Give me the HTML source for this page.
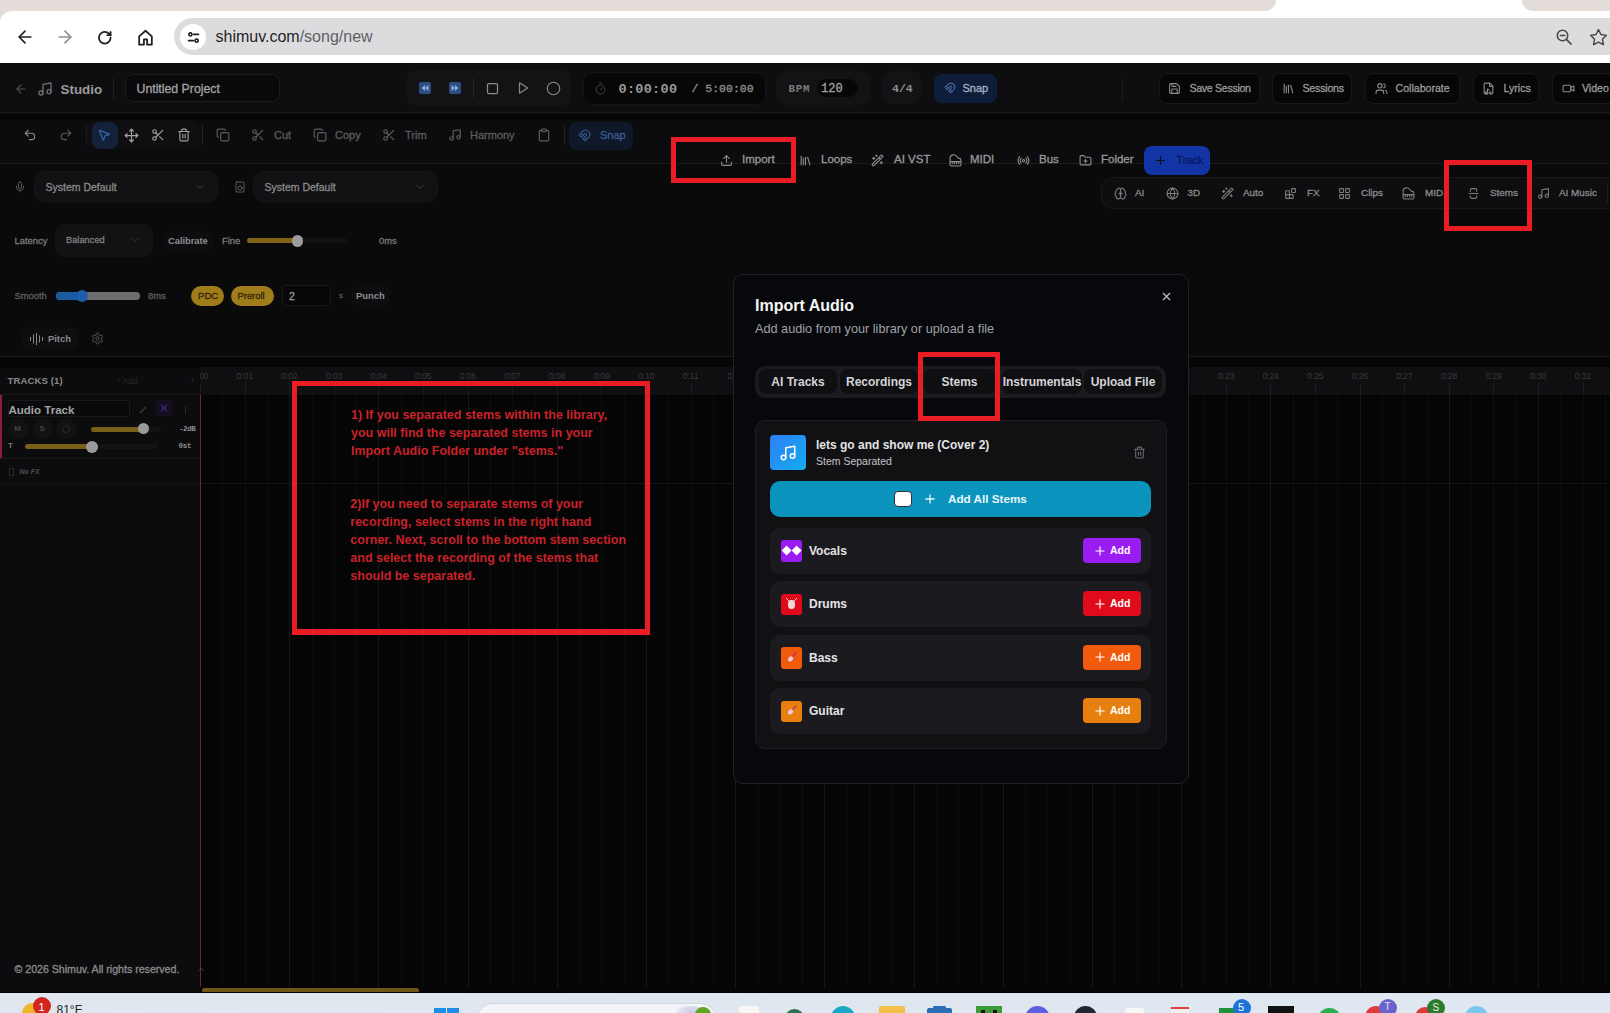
<!DOCTYPE html>
<html><head><meta charset="utf-8">
<style>
*{box-sizing:border-box;margin:0;padding:0}
html,body{width:1610px;height:1013px;overflow:hidden;background:#e4dcd8;font-family:"Liberation Sans",sans-serif}
.a{position:absolute}
svg{position:absolute;overflow:visible}
.t{position:absolute;white-space:nowrap}
.sb{-webkit-text-stroke:0.3px currentColor}
</style></head><body>
<div class="a" style="left:1260px;top:0px;width:280px;height:12px;background:#fff"></div><div class="a" style="left:0px;top:0px;width:1276px;height:11px;background:#e4dcd8;border-bottom-right-radius:11px"></div><div class="a" style="left:1522px;top:0px;width:88px;height:11px;background:#e4dcd8;border-bottom-left-radius:11px"></div><div class="a" style="left:0px;top:11px;width:1610px;height:52px;background:#fff;border-top-left-radius:12px"></div><svg style="left:14.5px;top:27.0px" width="20" height="20" viewBox="0 0 24 24" fill="none" stroke="#1f1f1f" stroke-width="2" stroke-linecap="round" stroke-linejoin="round" ><path d="m12 19-7-7 7-7"/><path d="M19 12H5"/></svg><svg style="left:55.0px;top:27.0px" width="20" height="20" viewBox="0 0 24 24" fill="none" stroke="#8e8e8e" stroke-width="2" stroke-linecap="round" stroke-linejoin="round" ><path d="M5 12h14"/><path d="m12 5 7 7-7 7"/></svg><svg style="left:97.2px;top:29.5px" width="15.5" height="15.5" viewBox="0 0 24 24" fill="none" stroke="#1f1f1f" stroke-width="2.8" stroke-linecap="round" stroke-linejoin="round" ><path d="M21 12a9 9 0 1 1-9-9c2.52 0 4.93 1 6.74 2.74L21 8"/><path d="M21 3v5h-5"/></svg><svg style="left:135.5px;top:27.5px" width="19" height="19" viewBox="0 0 24 24" fill="none" stroke="#1f1f1f" stroke-width="2.2" stroke-linecap="round" stroke-linejoin="round" ><path d="M4 21V10.5L12 3.5l8 7V21h-6v-6.5h-4V21z"/></svg><div class="a" style="left:174px;top:18px;width:1500px;height:37px;background:#dcdcdf;border-radius:19px"></div><div class="a" style="left:180px;top:24px;width:26px;height:26px;background:#fff;border-radius:50%"></div><svg style="left:185.5px;top:29.5px" width="15" height="15" viewBox="0 0 24 24" fill="none" stroke="#1f1f1f" stroke-width="2.6" stroke-linecap="round" stroke-linejoin="round" ><circle cx="7" cy="7" r="2.5"/><path d="M12 7h8"/><circle cx="17" cy="17" r="2.5"/><path d="M4 17h8"/></svg><div class="t " style="left:215.5px;top:29.0px;font-size:16px;line-height:16px;color:#1f1f1f;font-weight:normal;font-family:'Liberation Sans',sans-serif;">shimuv.com<span style="color:#5c5f63">/song/new</span></div><svg style="left:1555.0px;top:28.0px" width="18" height="18" viewBox="0 0 24 24" fill="none" stroke="#474747" stroke-width="2" stroke-linecap="round" stroke-linejoin="round" ><circle cx="10" cy="10" r="7"/><path d="M7 10h6"/><path d="m15.5 15.5 6 6"/></svg><svg style="left:1589.0px;top:27.5px" width="19" height="19" viewBox="0 0 24 24" fill="none" stroke="#474747" stroke-width="1.8" stroke-linecap="round" stroke-linejoin="round" ><polygon points="12 2 15.09 8.26 22 9.27 17 14.14 18.18 21.02 12 17.77 5.82 21.02 7 14.14 2 9.27 8.91 8.26 12 2"/></svg><div class="a" style="left:0px;top:63px;width:1610px;height:930px;background:#0a0a0b"></div><div class="a" style="left:0px;top:63px;width:1610px;height:50px;background:#0e0e10;border-bottom:1px solid #19191b"></div><div class="a" style="left:0px;top:114px;width:1610px;height:6px;background:#050506"></div><svg style="left:14.0px;top:81.5px" width="14" height="14" viewBox="0 0 24 24" fill="none" stroke="#4f4f4f" stroke-width="2" stroke-linecap="round" stroke-linejoin="round" ><path d="m12 19-7-7 7-7"/><path d="M19 12H5"/></svg><svg style="left:36.5px;top:80.5px" width="16" height="16" viewBox="0 0 24 24" fill="none" stroke="#6f6f6f" stroke-width="2" stroke-linecap="round" stroke-linejoin="round" ><path d="M9 18V5l12-2v13"/><circle cx="6" cy="18" r="3"/><circle cx="18" cy="16" r="3"/></svg><div class="t " style="left:60.5px;top:82.7px;font-size:13.4px;line-height:13.4px;color:#9c9c9c;font-weight:bold;font-family:'Liberation Sans',sans-serif;">Studio</div><div class="a" style="left:113px;top:78px;width:1px;height:22px;background:#1f1f22"></div><div class="a" style="left:125px;top:74px;width:155px;height:28px;background:#09090b;border:1px solid #1d1d20;border-radius:8px"></div><div class="t sb" style="left:136.5px;top:83.4px;font-size:12.3px;line-height:12.3px;color:#a3a3a3;font-weight:normal;font-family:'Liberation Sans',sans-serif;">Untitled Project</div><div class="a" style="left:406px;top:70px;width:165px;height:36px;background:#131315;border-radius:10px"></div><div class="a" style="left:419px;top:82px;width:12px;height:12px;background:#2a4f80;border-radius:2px"></div><svg style="left:419px;top:82px" width="12" height="12" viewBox="0 0 12 12"><path d="M6 3L2.5 6 6 9zM9.5 3L6 6 9.5 9z" fill="#8fb0dc"/></svg><div class="a" style="left:449px;top:82px;width:12px;height:12px;background:#2a4f80;border-radius:2px"></div><svg style="left:449px;top:82px" width="12" height="12" viewBox="0 0 12 12"><path d="M6 3L9.5 6 6 9zM2.5 3L6 6 2.5 9z" fill="#8fb0dc"/></svg><div class="a" style="left:473px;top:78px;width:1px;height:20px;background:#232326"></div><svg style="left:484.5px;top:80.5px" width="15" height="15" viewBox="0 0 24 24" fill="none" stroke="#8a8a8a" stroke-width="2" stroke-linecap="round" stroke-linejoin="round" ><rect x="4" y="4" width="16" height="16" rx="2"/></svg><svg style="left:515.5px;top:81.0px" width="14" height="14" viewBox="0 0 24 24" fill="none" stroke="#8a8a8a" stroke-width="2" stroke-linecap="round" stroke-linejoin="round" ><polygon points="6 3 20 12 6 21 6 3"/></svg><svg style="left:545.5px;top:80.5px" width="15" height="15" viewBox="0 0 24 24" fill="none" stroke="#8a8a8a" stroke-width="1.8" stroke-linecap="round" stroke-linejoin="round" ><circle cx="12" cy="12" r="10"/></svg><div class="a" style="left:583px;top:72px;width:183px;height:32.5px;background:#070708;border-radius:10px;border:1px solid #141416"></div><svg style="left:593.5px;top:81.5px" width="13" height="13" viewBox="0 0 24 24" fill="none" stroke="#3a3a3a" stroke-width="2" stroke-linecap="round" stroke-linejoin="round" ><line x1="10" x2="14" y1="2" y2="2"/><line x1="12" x2="15" y1="14" y2="11"/><circle cx="12" cy="14" r="8"/></svg><div class="t " style="left:618.5px;top:82.5px;font-size:13.5px;line-height:13.5px;color:#9a9a9a;font-weight:bold;font-family:'Liberation Mono',monospace;letter-spacing:0.3px">0:00:00</div><div class="t sb" style="left:691.5px;top:83.0px;font-size:11.5px;line-height:11.5px;color:#8f8f8f;font-weight:normal;font-family:'Liberation Mono',monospace;letter-spacing:0px">/ 5:00:00</div><div class="a" style="left:776px;top:71px;width:95px;height:34px;background:#131315;border-radius:10px"></div><div class="t " style="left:788.5px;top:83.6px;font-size:10.8px;line-height:10.8px;color:#7a7a7a;font-weight:bold;font-family:'Liberation Mono',monospace;letter-spacing:0.8px">BPM</div><div class="a" style="left:817px;top:79px;width:41px;height:18px;background:#070708;border-radius:9px"></div><div class="t sb" style="left:821.0px;top:83.0px;font-size:12px;line-height:12px;color:#a0a0a0;font-weight:normal;font-family:'Liberation Mono',monospace;">120</div><div class="a" style="left:882px;top:71px;width:40px;height:33px;background:#131315;border-radius:10px"></div><div class="t " style="left:892.0px;top:83.2px;font-size:11.5px;line-height:11.5px;color:#8f8f8f;font-weight:bold;font-family:'Liberation Mono',monospace;">4/4</div><div class="a" style="left:934px;top:74px;width:63px;height:29px;background:#0d1d3a;border-radius:8px"></div><svg style="left:944.0px;top:82.0px" width="12" height="12" viewBox="0 0 24 24" fill="none" stroke="#5a7fc0" stroke-width="2" stroke-linecap="round" stroke-linejoin="round" ><path d="m6 15-4-4 6.75-6.77a7.790 7.790 0 0 1 11 11L13 22l-4-4 6.39-6.36a2.14 2.14 0 0 0-3-3L6 15"/><path d="m5 8 4 4"/><path d="m12 15 4 4"/></svg><div class="t sb" style="left:962.5px;top:83.0px;font-size:11px;line-height:11px;color:#a7b4c8;font-weight:normal;font-family:'Liberation Sans',sans-serif;">Snap</div><div class="a" style="left:1122px;top:78px;width:1px;height:22px;background:#1c1c1f"></div><div class="a" style="left:1159px;top:73px;width:101px;height:31px;background:#060607;border:1px solid #19191c;border-radius:8px"></div><svg style="left:1168.0px;top:82.0px" width="13" height="13" viewBox="0 0 24 24" fill="none" stroke="#8c8c8c" stroke-width="2" stroke-linecap="round" stroke-linejoin="round" ><path d="M15.2 3a2 2 0 0 1 1.4.6l3.8 3.8a2 2 0 0 1 .6 1.4V19a2 2 0 0 1-2 2H5a2 2 0 0 1-2-2V5a2 2 0 0 1 2-2z"/><path d="M17 21v-7a1 1 0 0 0-1-1H8a1 1 0 0 0-1 1v7"/><path d="M7 3v4a1 1 0 0 0 1 1h7"/></svg><div class="t sb" style="left:1189.5px;top:83.2px;font-size:10.6px;line-height:10.6px;color:#9a9a9a;font-weight:normal;font-family:'Liberation Sans',sans-serif;letter-spacing:-0.3px">Save Session</div><div class="a" style="left:1272px;top:73px;width:80px;height:31px;background:#060607;border:1px solid #19191c;border-radius:8px"></div><svg style="left:1281.5px;top:82.0px" width="13" height="13" viewBox="0 0 24 24" fill="none" stroke="#8c8c8c" stroke-width="2" stroke-linecap="round" stroke-linejoin="round" ><path d="m16 6 4 14"/><path d="M12 6v14"/><path d="M8 8v12"/><path d="M4 4v16"/></svg><div class="t sb" style="left:1302.5px;top:83.2px;font-size:10.6px;line-height:10.6px;color:#9a9a9a;font-weight:normal;font-family:'Liberation Sans',sans-serif;letter-spacing:-0.2px">Sessions</div><div class="a" style="left:1365px;top:73px;width:95px;height:31px;background:#060607;border:1px solid #19191c;border-radius:8px"></div><svg style="left:1374.5px;top:82.0px" width="13" height="13" viewBox="0 0 24 24" fill="none" stroke="#8c8c8c" stroke-width="2" stroke-linecap="round" stroke-linejoin="round" ><path d="M16 21v-2a4 4 0 0 0-4-4H6a4 4 0 0 0-4 4v2"/><circle cx="9" cy="7" r="4"/><path d="M22 21v-2a4 4 0 0 0-3-3.87"/><path d="M16 3.13a4 4 0 0 1 0 7.75"/></svg><div class="t sb" style="left:1395.5px;top:83.2px;font-size:10.6px;line-height:10.6px;color:#9a9a9a;font-weight:normal;font-family:'Liberation Sans',sans-serif;letter-spacing:0px">Collaborate</div><div class="a" style="left:1473px;top:73px;width:66px;height:31px;background:#060607;border:1px solid #19191c;border-radius:8px"></div><svg style="left:1482.0px;top:82.0px" width="13" height="13" viewBox="0 0 24 24" fill="none" stroke="#8c8c8c" stroke-width="2" stroke-linecap="round" stroke-linejoin="round" ><path d="M10.5 22H6a2 2 0 0 1-2-2V4a2 2 0 0 1 2-2h8.5L20 7.5V20a2 2 0 0 1-2 2h-1.5"/><path d="M14 2v6h6"/><path d="M10 20v-7l3 1.474"/><circle cx="6" cy="20" r="2" transform="translate(2 0)"/><circle cx="15" cy="20" r="2"/></svg><div class="t sb" style="left:1503.5px;top:83.2px;font-size:10.6px;line-height:10.6px;color:#9a9a9a;font-weight:normal;font-family:'Liberation Sans',sans-serif;letter-spacing:0px">Lyrics</div><div class="a" style="left:1552px;top:73px;width:80px;height:31px;background:#060607;border:1px solid #19191c;border-radius:8px"></div><svg style="left:1561.5px;top:82.0px" width="13" height="13" viewBox="0 0 24 24" fill="none" stroke="#8c8c8c" stroke-width="2" stroke-linecap="round" stroke-linejoin="round" ><path d="m16 13 5.223 3.482a.5.5 0 0 0 .777-.416V7.87a.5.5 0 0 0-.752-.432L16 10.5"/><rect x="2" y="6" width="14" height="12" rx="2"/></svg><div class="t sb" style="left:1582.0px;top:83.2px;font-size:10.6px;line-height:10.6px;color:#9a9a9a;font-weight:normal;font-family:'Liberation Sans',sans-serif;letter-spacing:0px">Video</div><div class="a" style="left:0px;top:120px;width:1610px;height:44px;background:#0c0c0e;border-bottom:1px solid #1b1b1e"></div><div class="a" style="left:87px;top:121px;width:112px;height:28px;background:#0f0f11;border-radius:8px"></div><svg style="left:22.5px;top:128.0px" width="14" height="14" viewBox="0 0 24 24" fill="none" stroke="#8a8a8a" stroke-width="2" stroke-linecap="round" stroke-linejoin="round" ><path d="M9 14 4 9l5-5"/><path d="M4 9h10.5a5.5 5.5 0 0 1 5.5 5.5a5.5 5.5 0 0 1-5.5 5.5H11"/></svg><svg style="left:58.5px;top:128.0px" width="14" height="14" viewBox="0 0 24 24" fill="none" stroke="#5a5a5a" stroke-width="2" stroke-linecap="round" stroke-linejoin="round" ><path d="m15 14 5-5-5-5"/><path d="M20 9H9.5A5.5 5.5 0 0 0 4 14.5A5.5 5.5 0 0 0 9.5 20H13"/></svg><div class="a" style="left:86px;top:125px;width:1px;height:20px;background:#1c1c1f"></div><div class="a" style="left:91.5px;top:121.5px;width:26.5px;height:27.5px;background:#13223a;border-radius:8px"></div><svg style="left:97.0px;top:128.0px" width="14" height="14" viewBox="0 0 24 24" fill="none" stroke="#3d64a8" stroke-width="2" stroke-linecap="round" stroke-linejoin="round" ><path d="M4.037 4.688a.495.495 0 0 1 .651-.651l16 6.5a.5.5 0 0 1-.063.947l-6.124 1.58a2 2 0 0 0-1.438 1.435l-1.579 6.126a.5.5 0 0 1-.947.063z"/></svg><svg style="left:123.5px;top:127.5px" width="15" height="15" viewBox="0 0 24 24" fill="none" stroke="#a0a0a0" stroke-width="2" stroke-linecap="round" stroke-linejoin="round" ><path d="M12 2v20"/><path d="m15 19-3 3-3-3"/><path d="m19 9 3 3-3 3"/><path d="M2 12h20"/><path d="m5 9-3 3 3 3"/><path d="m9 5 3-3 3 3"/></svg><svg style="left:150.5px;top:128.0px" width="14" height="14" viewBox="0 0 24 24" fill="none" stroke="#a0a0a0" stroke-width="2" stroke-linecap="round" stroke-linejoin="round" ><circle cx="6" cy="6" r="3"/><path d="M8.12 8.12 12 12"/><path d="M20 4 8.12 15.88"/><circle cx="6" cy="18" r="3"/><path d="M14.8 14.8 20 20"/></svg><svg style="left:177.0px;top:128.0px" width="14" height="14" viewBox="0 0 24 24" fill="none" stroke="#a0a0a0" stroke-width="2" stroke-linecap="round" stroke-linejoin="round" ><path d="M3 6h18"/><path d="M19 6v14c0 1-1 2-2 2H7c-1 0-2-1-2-2V6"/><path d="M8 6V4c0-1 1-2 2-2h4c1 0 2 1 2 2v2"/><line x1="10" x2="10" y1="11" y2="17"/><line x1="14" x2="14" y1="11" y2="17"/></svg><div class="a" style="left:202px;top:125px;width:1px;height:20px;background:#222225"></div><svg style="left:216.0px;top:128.0px" width="14" height="14" viewBox="0 0 24 24" fill="none" stroke="#5c5c5c" stroke-width="2" stroke-linecap="round" stroke-linejoin="round" ><rect width="14" height="14" x="8" y="8" rx="2" ry="2"/><path d="M4 16c-1.1 0-2-.9-2-2V4c0-1.1.9-2 2-2h10c1.1 0 2 .9 2 2"/></svg><svg style="left:250.5px;top:128.0px" width="14" height="14" viewBox="0 0 24 24" fill="none" stroke="#5c5c5c" stroke-width="2" stroke-linecap="round" stroke-linejoin="round" ><circle cx="6" cy="6" r="3"/><path d="M8.12 8.12 12 12"/><path d="M20 4 8.12 15.88"/><circle cx="6" cy="18" r="3"/><path d="M14.8 14.8 20 20"/></svg><div class="t sb" style="left:274.0px;top:129.5px;font-size:11px;line-height:11px;color:#5c5c5c;font-weight:normal;font-family:'Liberation Sans',sans-serif;">Cut</div><svg style="left:313.0px;top:128.0px" width="14" height="14" viewBox="0 0 24 24" fill="none" stroke="#5c5c5c" stroke-width="2" stroke-linecap="round" stroke-linejoin="round" ><rect width="14" height="14" x="8" y="8" rx="2" ry="2"/><path d="M4 16c-1.1 0-2-.9-2-2V4c0-1.1.9-2 2-2h10c1.1 0 2 .9 2 2"/></svg><div class="t sb" style="left:335.0px;top:129.5px;font-size:11px;line-height:11px;color:#5c5c5c;font-weight:normal;font-family:'Liberation Sans',sans-serif;">Copy</div><svg style="left:381.5px;top:128.0px" width="14" height="14" viewBox="0 0 24 24" fill="none" stroke="#5c5c5c" stroke-width="2" stroke-linecap="round" stroke-linejoin="round" ><circle cx="6" cy="6" r="3"/><path d="M8.12 8.12 12 12"/><path d="M20 4 8.12 15.88"/><circle cx="6" cy="18" r="3"/><path d="M14.8 14.8 20 20"/></svg><div class="t sb" style="left:405.0px;top:129.5px;font-size:11px;line-height:11px;color:#5c5c5c;font-weight:normal;font-family:'Liberation Sans',sans-serif;">Trim</div><svg style="left:448.0px;top:128.0px" width="14" height="14" viewBox="0 0 24 24" fill="none" stroke="#5c5c5c" stroke-width="2" stroke-linecap="round" stroke-linejoin="round" ><path d="M9 18V5l12-2v13"/><circle cx="6" cy="18" r="3"/><circle cx="18" cy="16" r="3"/></svg><div class="t sb" style="left:470.0px;top:129.5px;font-size:11px;line-height:11px;color:#5c5c5c;font-weight:normal;font-family:'Liberation Sans',sans-serif;">Harmony</div><svg style="left:537.0px;top:128.0px" width="14" height="14" viewBox="0 0 24 24" fill="none" stroke="#5c5c5c" stroke-width="2" stroke-linecap="round" stroke-linejoin="round" ><rect width="8" height="4" x="8" y="2" rx="1" ry="1"/><path d="M16 4h2a2 2 0 0 1 2 2v14a2 2 0 0 1-2 2H6a2 2 0 0 1-2-2V6a2 2 0 0 1 2-2h2"/></svg><div class="a" style="left:564px;top:125px;width:1px;height:20px;background:#222225"></div><div class="a" style="left:569px;top:121.5px;width:64px;height:28.5px;background:#0e1828;border-radius:8px"></div><svg style="left:577.5px;top:128.5px" width="13" height="13" viewBox="0 0 24 24" fill="none" stroke="#355a90" stroke-width="2" stroke-linecap="round" stroke-linejoin="round" ><path d="m6 15-4-4 6.75-6.77a7.790 7.790 0 0 1 11 11L13 22l-4-4 6.39-6.36a2.14 2.14 0 0 0-3-3L6 15"/><path d="m5 8 4 4"/><path d="m12 15 4 4"/></svg><div class="t sb" style="left:600.0px;top:129.5px;font-size:11px;line-height:11px;color:#3b5d92;font-weight:normal;font-family:'Liberation Sans',sans-serif;">Snap</div><svg style="left:719.5px;top:153.5px" width="13" height="13" viewBox="0 0 24 24" fill="none" stroke="#8f8f8f" stroke-width="2" stroke-linecap="round" stroke-linejoin="round" ><path d="M21 15v4a2 2 0 0 1-2 2H5a2 2 0 0 1-2-2v-4"/><polyline points="17 8 12 3 7 8"/><line x1="12" x2="12" y1="3" y2="15"/></svg><div class="t sb" style="left:742.0px;top:154.2px;font-size:11.5px;line-height:11.5px;color:#9a9a9a;font-weight:normal;font-family:'Liberation Sans',sans-serif;">Import</div><svg style="left:798.5px;top:153.5px" width="13" height="13" viewBox="0 0 24 24" fill="none" stroke="#8f8f8f" stroke-width="2" stroke-linecap="round" stroke-linejoin="round" ><path d="m16 6 4 14"/><path d="M12 6v14"/><path d="M8 8v12"/><path d="M4 4v16"/></svg><div class="t sb" style="left:821.0px;top:154.2px;font-size:11.5px;line-height:11.5px;color:#9a9a9a;font-weight:normal;font-family:'Liberation Sans',sans-serif;">Loops</div><svg style="left:870.5px;top:153.5px" width="13" height="13" viewBox="0 0 24 24" fill="none" stroke="#8f8f8f" stroke-width="2" stroke-linecap="round" stroke-linejoin="round" ><path d="m21.64 3.64-1.28-1.28a1.21 1.21 0 0 0-1.72 0L2.36 18.64a1.21 1.21 0 0 0 0 1.72l1.28 1.28a1.2 1.2 0 0 0 1.72 0L21.64 5.36a1.2 1.2 0 0 0 0-1.72"/><path d="m14 7 3 3"/><path d="M5 6v4"/><path d="M19 14v4"/><path d="M10 2v2"/><path d="M7 8H3"/><path d="M21 16h-4"/><path d="M11 3H9"/></svg><div class="t sb" style="left:894.0px;top:154.2px;font-size:11.5px;line-height:11.5px;color:#9a9a9a;font-weight:normal;font-family:'Liberation Sans',sans-serif;">AI VST</div><svg style="left:948.5px;top:153.5px" width="13" height="13" viewBox="0 0 24 24" fill="none" stroke="#8f8f8f" stroke-width="2" stroke-linecap="round" stroke-linejoin="round" ><path d="M18.5 8c-1.4 0-2.6-.8-3.2-2A6.87 6.87 0 0 0 2 9v11a2 2 0 0 0 2 2h16a2 2 0 0 0 2-2v-8.5C22 9.6 20.4 8 18.5 8"/><path d="M2 14h20"/><path d="M6 14v4"/><path d="M10 14v4"/><path d="M14 14v4"/><path d="M18 14v4"/></svg><div class="t sb" style="left:970.0px;top:154.2px;font-size:11.5px;line-height:11.5px;color:#9a9a9a;font-weight:normal;font-family:'Liberation Sans',sans-serif;">MIDI</div><svg style="left:1016.5px;top:153.5px" width="13" height="13" viewBox="0 0 24 24" fill="none" stroke="#8f8f8f" stroke-width="2" stroke-linecap="round" stroke-linejoin="round" ><path d="M4.9 19.1C1 15.2 1 8.8 4.9 4.9"/><path d="M7.8 16.2c-2.3-2.3-2.3-6.1 0-8.5"/><circle cx="12" cy="12" r="2"/><path d="M16.2 7.8c2.3 2.3 2.3 6.1 0 8.5"/><path d="M19.1 4.9C23 8.8 23 15.1 19.1 19"/></svg><div class="t sb" style="left:1039.0px;top:154.2px;font-size:11.5px;line-height:11.5px;color:#9a9a9a;font-weight:normal;font-family:'Liberation Sans',sans-serif;">Bus</div><svg style="left:1078.5px;top:153.5px" width="13" height="13" viewBox="0 0 24 24" fill="none" stroke="#8f8f8f" stroke-width="2" stroke-linecap="round" stroke-linejoin="round" ><path d="M12 10v6"/><path d="M9 13h6"/><path d="M20 20a2 2 0 0 0 2-2V8a2 2 0 0 0-2-2h-7.9a2 2 0 0 1-1.69-.9L9.6 3.9A2 2 0 0 0 7.93 3H4a2 2 0 0 0-2 2v13a2 2 0 0 0 2 2Z"/></svg><div class="t sb" style="left:1101.0px;top:154.2px;font-size:11.5px;line-height:11.5px;color:#9a9a9a;font-weight:normal;font-family:'Liberation Sans',sans-serif;">Folder</div><div class="a" style="left:1144px;top:146px;width:66px;height:29px;background:#1234a4;border-radius:8px"></div><svg style="left:1153.5px;top:154.0px" width="13" height="13" viewBox="0 0 24 24" fill="none" stroke="#0b0f1c" stroke-width="2.2" stroke-linecap="round" stroke-linejoin="round" ><path d="M5 12h14"/><path d="M12 5v14"/></svg><div class="t sb" style="left:1176.5px;top:155.1px;font-size:10.8px;line-height:10.8px;color:#0a1a5c;font-weight:normal;font-family:'Liberation Sans',sans-serif;">Track</div><div class="a" style="left:1101px;top:177px;width:530px;height:32px;background:#0e0e10;border:1px solid #18181b;border-radius:12px"></div><svg style="left:1113.5px;top:186.5px" width="13" height="13" viewBox="0 0 24 24" fill="none" stroke="#7d7d7d" stroke-width="2" stroke-linecap="round" stroke-linejoin="round" ><path d="M12 5a3 3 0 1 0-5.997.125 4 4 0 0 0-2.526 5.77 4 4 0 0 0 .556 6.588A4 4 0 1 0 12 18Z"/><path d="M12 5a3 3 0 1 1 5.997.125 4 4 0 0 1 2.526 5.77 4 4 0 0 1-.556 6.588A4 4 0 1 1 12 18Z"/><path d="M12 5v13"/><path d="M9 13a4.5 4.5 0 0 0 3-4"/><path d="M15 13a4.5 4.5 0 0 1-3-4"/></svg><div class="t sb" style="left:1135.0px;top:188.4px;font-size:9.9px;line-height:9.9px;color:#8a8a8a;font-weight:normal;font-family:'Liberation Sans',sans-serif;">AI</div><svg style="left:1165.5px;top:186.5px" width="13" height="13" viewBox="0 0 24 24" fill="none" stroke="#7d7d7d" stroke-width="2" stroke-linecap="round" stroke-linejoin="round" ><circle cx="12" cy="12" r="10"/><path d="M12 2a14.5 14.5 0 0 0 0 20 14.5 14.5 0 0 0 0-20"/><path d="M2 12h20"/></svg><div class="t sb" style="left:1187.5px;top:188.4px;font-size:9.9px;line-height:9.9px;color:#8a8a8a;font-weight:normal;font-family:'Liberation Sans',sans-serif;">3D</div><svg style="left:1220.5px;top:186.5px" width="13" height="13" viewBox="0 0 24 24" fill="none" stroke="#7d7d7d" stroke-width="2" stroke-linecap="round" stroke-linejoin="round" ><path d="m21.64 3.64-1.28-1.28a1.21 1.21 0 0 0-1.72 0L2.36 18.64a1.21 1.21 0 0 0 0 1.72l1.28 1.28a1.2 1.2 0 0 0 1.72 0L21.64 5.36a1.2 1.2 0 0 0 0-1.72"/><path d="m14 7 3 3"/><path d="M5 6v4"/><path d="M19 14v4"/><path d="M10 2v2"/><path d="M7 8H3"/><path d="M21 16h-4"/><path d="M11 3H9"/></svg><div class="t sb" style="left:1243.0px;top:188.4px;font-size:9.9px;line-height:9.9px;color:#8a8a8a;font-weight:normal;font-family:'Liberation Sans',sans-serif;">Auto</div><svg style="left:1283.5px;top:186.5px" width="13" height="13" viewBox="0 0 24 24" fill="none" stroke="#7d7d7d" stroke-width="2" stroke-linecap="round" stroke-linejoin="round" ><rect width="7" height="7" x="14" y="3" rx="1"/><path d="M10 21V8a1 1 0 0 0-1-1H4a1 1 0 0 0-1 1v12a1 1 0 0 0 1 1h12a1 1 0 0 0 1-1v-5a1 1 0 0 0-1-1H3"/></svg><div class="t sb" style="left:1307.0px;top:188.4px;font-size:9.9px;line-height:9.9px;color:#8a8a8a;font-weight:normal;font-family:'Liberation Sans',sans-serif;">FX</div><svg style="left:1338.0px;top:186.5px" width="13" height="13" viewBox="0 0 24 24" fill="none" stroke="#7d7d7d" stroke-width="2" stroke-linecap="round" stroke-linejoin="round" ><rect width="7" height="7" x="3" y="3" rx="1"/><rect width="7" height="7" x="14" y="3" rx="1"/><rect width="7" height="7" x="14" y="14" rx="1"/><rect width="7" height="7" x="3" y="14" rx="1"/></svg><div class="t sb" style="left:1361.0px;top:188.4px;font-size:9.9px;line-height:9.9px;color:#8a8a8a;font-weight:normal;font-family:'Liberation Sans',sans-serif;">Clips</div><svg style="left:1401.5px;top:186.5px" width="13" height="13" viewBox="0 0 24 24" fill="none" stroke="#7d7d7d" stroke-width="2" stroke-linecap="round" stroke-linejoin="round" ><path d="M18.5 8c-1.4 0-2.6-.8-3.2-2A6.87 6.87 0 0 0 2 9v11a2 2 0 0 0 2 2h16a2 2 0 0 0 2-2v-8.5C22 9.6 20.4 8 18.5 8"/><path d="M2 14h20"/><path d="M6 14v4"/><path d="M10 14v4"/><path d="M14 14v4"/><path d="M18 14v4"/></svg><div class="t sb" style="left:1425.0px;top:188.4px;font-size:9.9px;line-height:9.9px;color:#8a8a8a;font-weight:normal;font-family:'Liberation Sans',sans-serif;">MID</div><svg style="left:1466.5px;top:186.5px" width="13" height="13" viewBox="0 0 24 24" fill="none" stroke="#7d7d7d" stroke-width="2" stroke-linecap="round" stroke-linejoin="round" ><path d="M6 8V6a3 3 0 0 1 3-3h6a3 3 0 0 1 3 3v2"/><path d="M4 12h16"/><path d="M6 16v2a3 3 0 0 0 3 3h6a3 3 0 0 0 3-3v-2"/></svg><div class="t sb" style="left:1490.0px;top:188.4px;font-size:9.9px;line-height:9.9px;color:#8a8a8a;font-weight:normal;font-family:'Liberation Sans',sans-serif;">Stems</div><svg style="left:1536.5px;top:186.5px" width="13" height="13" viewBox="0 0 24 24" fill="none" stroke="#7d7d7d" stroke-width="2" stroke-linecap="round" stroke-linejoin="round" ><path d="M9 18V5l12-2v13"/><circle cx="6" cy="18" r="3"/><circle cx="18" cy="16" r="3"/></svg><div class="t sb" style="left:1559.0px;top:188.4px;font-size:9.9px;line-height:9.9px;color:#8a8a8a;font-weight:normal;font-family:'Liberation Sans',sans-serif;">AI Music</div><div class="a" style="left:1607px;top:183px;width:1px;height:20px;background:#1e1e21"></div><svg style="left:14.0px;top:181.0px" width="12" height="12" viewBox="0 0 24 24" fill="none" stroke="#5a5a5a" stroke-width="2" stroke-linecap="round" stroke-linejoin="round" ><path d="M12 2a3 3 0 0 0-3 3v7a3 3 0 0 0 6 0V5a3 3 0 0 0-3-3Z"/><path d="M19 10v2a7 7 0 0 1-14 0v-2"/><line x1="12" x2="12" y1="19" y2="22"/></svg><div class="a" style="left:34px;top:171px;width:184px;height:31px;background:#111113;border:1px solid #151518;border-radius:10px"></div><div class="t sb" style="left:45.5px;top:181.8px;font-size:10.5px;line-height:10.5px;color:#8a8a8a;font-weight:normal;font-family:'Liberation Sans',sans-serif;">System Default</div><svg style="left:194.0px;top:181.0px" width="12" height="12" viewBox="0 0 24 24" fill="none" stroke="#4a4a4a" stroke-width="1.6" stroke-linecap="round" stroke-linejoin="round" ><path d="m6 9 6 6 6-6"/></svg><svg style="left:234.0px;top:181.0px" width="12" height="12" viewBox="0 0 24 24" fill="none" stroke="#5a5a5a" stroke-width="2" stroke-linecap="round" stroke-linejoin="round" ><rect width="16" height="20" x="4" y="2" rx="2"/><circle cx="12" cy="14" r="4"/><path d="M12 6h.01"/></svg><div class="a" style="left:253px;top:171px;width:185px;height:31px;background:#111113;border:1px solid #151518;border-radius:10px"></div><div class="t sb" style="left:264.5px;top:181.8px;font-size:10.5px;line-height:10.5px;color:#8a8a8a;font-weight:normal;font-family:'Liberation Sans',sans-serif;">System Default</div><svg style="left:414.0px;top:181.0px" width="12" height="12" viewBox="0 0 24 24" fill="none" stroke="#4a4a4a" stroke-width="1.6" stroke-linecap="round" stroke-linejoin="round" ><path d="m6 9 6 6 6-6"/></svg><div class="t sb" style="left:14.5px;top:236.3px;font-size:9.4px;line-height:9.4px;color:#7a7a7a;font-weight:normal;font-family:'Liberation Sans',sans-serif;">Latency</div><div class="a" style="left:54.5px;top:224px;width:98.5px;height:32.5px;background:#121214;border-radius:10px"></div><div class="t sb" style="left:66.0px;top:236.3px;font-size:9.3px;line-height:9.3px;color:#7f7f7f;font-weight:normal;font-family:'Liberation Sans',sans-serif;">Balanced</div><svg style="left:129.0px;top:234.0px" width="12" height="12" viewBox="0 0 24 24" fill="none" stroke="#3f3f3f" stroke-width="1.6" stroke-linecap="round" stroke-linejoin="round" ><path d="m6 9 6 6 6-6"/></svg><div class="a" style="left:161.5px;top:231px;width:52.5px;height:19.5px;background:#0d0d0f;border-radius:6px"></div><div class="t " style="left:168.0px;top:236.7px;font-size:9.3px;line-height:9.3px;color:#8f8f8f;font-weight:bold;font-family:'Liberation Sans',sans-serif;">Calibrate</div><div class="t sb" style="left:222.0px;top:236.3px;font-size:9.4px;line-height:9.4px;color:#7a7a7a;font-weight:normal;font-family:'Liberation Sans',sans-serif;">Fine</div><div class="a" style="left:247px;top:238px;width:100px;height:5px;background:#121214;border-radius:3px"></div><div class="a" style="left:247px;top:238px;width:51px;height:5px;background:#806316;border-radius:3px"></div><div class="a" style="left:291.5px;top:235px;width:11.5px;height:11.5px;background:#9c9c9c;border-radius:50%"></div><div class="t sb" style="left:379.0px;top:236.3px;font-size:9.4px;line-height:9.4px;color:#7a7a7a;font-weight:normal;font-family:'Liberation Sans',sans-serif;">0ms</div><div class="t sb" style="left:14.5px;top:291.3px;font-size:9.4px;line-height:9.4px;color:#5f5f5f;font-weight:normal;font-family:'Liberation Sans',sans-serif;">Smooth</div><div class="a" style="left:56px;top:292px;width:84px;height:8px;background:#6f6f6f;border-radius:4px"></div><div class="a" style="left:56px;top:292px;width:28px;height:8px;background:#1a5aa0;border-radius:4px"></div><div class="a" style="left:76px;top:290px;width:12px;height:12px;background:#1d5fa8;border-radius:50%"></div><div class="t sb" style="left:148.0px;top:291.3px;font-size:9.4px;line-height:9.4px;color:#5f5f5f;font-weight:normal;font-family:'Liberation Sans',sans-serif;">8ms</div><div class="a" style="left:191px;top:285.5px;width:33px;height:20.5px;background:#a07c1a;border-radius:10px"></div><div class="t sb" style="left:198.0px;top:291.2px;font-size:9.6px;line-height:9.6px;color:#33270a;font-weight:normal;font-family:'Liberation Sans',sans-serif;">PDC</div><div class="a" style="left:231px;top:285.5px;width:43px;height:20.5px;background:#a07c1a;border-radius:10px"></div><div class="t sb" style="left:237.5px;top:291.3px;font-size:9.4px;line-height:9.4px;color:#33270a;font-weight:normal;font-family:'Liberation Sans',sans-serif;">Preroll</div><div class="a" style="left:282px;top:285px;width:48.5px;height:21px;background:#070708;border:1px solid #1a1a1d;border-radius:4px"></div><div class="t sb" style="left:289.0px;top:290.8px;font-size:10.5px;line-height:10.5px;color:#9a9a9a;font-weight:normal;font-family:'Liberation Sans',sans-serif;">2</div><div class="t sb" style="left:339.0px;top:292.0px;font-size:8px;line-height:8px;color:#555;font-weight:normal;font-family:'Liberation Sans',sans-serif;">s</div><div class="a" style="left:351px;top:286px;width:39px;height:20px;background:#0d0d0f;border-radius:6px"></div><div class="t " style="left:356.0px;top:291.3px;font-size:9.4px;line-height:9.4px;color:#8f8f8f;font-weight:bold;font-family:'Liberation Sans',sans-serif;">Punch</div><div class="a" style="left:21px;top:327px;width:57px;height:23px;background:#0e0e10;border-radius:8px"></div><svg style="left:30px;top:332.5px" width="13" height="12" viewBox="0 0 13 12"><path d="M0.5 4v4M3.5 1.5v9M6.5 0v12M9.5 2.5v7M12.5 4v4" stroke="#8a8a8a" stroke-width="1"/></svg><div class="t " style="left:48.0px;top:333.8px;font-size:9.4px;line-height:9.4px;color:#8a8a8a;font-weight:bold;font-family:'Liberation Sans',sans-serif;">Pitch</div><svg style="left:90.5px;top:332.0px" width="13" height="13" viewBox="0 0 24 24" fill="none" stroke="#444" stroke-width="2" stroke-linecap="round" stroke-linejoin="round" ><path d="M12.22 2h-.44a2 2 0 0 0-2 2v.18a2 2 0 0 1-1 1.73l-.43.25a2 2 0 0 1-2 0l-.15-.08a2 2 0 0 0-2.73.73l-.22.38a2 2 0 0 0 .73 2.730l.15.1a2 2 0 0 1 1 1.72v.51a2 2 0 0 1-1 1.74l-.15.09a2 2 0 0 0-.73 2.73l.22.38a2 2 0 0 0 2.73.73l.15-.08a2 2 0 0 1 2 0l.43.25a2 2 0 0 1 1 1.73V20a2 2 0 0 0 2 2h.44a2 2 0 0 0 2-2v-.18a2 2 0 0 1 1-1.73l.43-.25a2 2 0 0 1 2 0l.15.08a2 2 0 0 0 2.73-.73l.22-.39a2 2 0 0 0-.73-2.73l-.15-.08a2 2 0 0 1-1-1.74v-.5a2 2 0 0 1 1-1.74l.15-.09a2 2 0 0 0 .73-2.73l-.22-.38a2 2 0 0 0-2.73-.73l-.15.08a2 2 0 0 1-2 0l-.43-.25a2 2 0 0 1-1-1.73V4a2 2 0 0 0-2-2z"/><circle cx="12" cy="12" r="3"/></svg><div class="a" style="left:0px;top:356px;width:1610px;height:1px;background:#1b1b1e"></div><div class="a" style="left:0px;top:357px;width:1610px;height:636px;background:#050505"></div><div class="a" style="left:0px;top:357px;width:200px;height:636px;background:#0c0c0e"></div><div class="a" style="left:0px;top:357px;width:200px;height:11px;background:#050505"></div><div class="t" style="left:7.5px;top:375.5px;font-size:9.5px;line-height:10px;color:#8a8a8a;font-weight:bold;letter-spacing:0.15px">TRACKS (1)</div><div class="t" style="left:116px;top:377px;font-size:8.5px;line-height:9px;color:#262628">+ Add</div><div class="t" style="left:190px;top:376px;font-size:8.5px;line-height:9px;color:#2a2a2c">+</div><div class="a" style="left:0px;top:394px;width:200px;height:1px;background:#18181b"></div><div class="a" style="left:200px;top:367px;width:1410px;height:28px;background:#0f0f11"></div><div class="a" style="left:200.00px;top:395px;width:1px;height:593px;background:#12191c"></div><div class="a" style="left:222.30px;top:395px;width:1px;height:593px;background:#0b0c0e"></div><div class="a" style="left:244.60px;top:395px;width:1px;height:593px;background:#0b0c0e"></div><div class="a" style="left:266.90px;top:395px;width:1px;height:593px;background:#0b0c0e"></div><div class="a" style="left:289.20px;top:395px;width:1px;height:593px;background:#12191c"></div><div class="a" style="left:311.50px;top:395px;width:1px;height:593px;background:#0b0c0e"></div><div class="a" style="left:333.80px;top:395px;width:1px;height:593px;background:#0b0c0e"></div><div class="a" style="left:356.10px;top:395px;width:1px;height:593px;background:#0b0c0e"></div><div class="a" style="left:378.40px;top:395px;width:1px;height:593px;background:#12191c"></div><div class="a" style="left:400.70px;top:395px;width:1px;height:593px;background:#0b0c0e"></div><div class="a" style="left:423.00px;top:395px;width:1px;height:593px;background:#0b0c0e"></div><div class="a" style="left:445.30px;top:395px;width:1px;height:593px;background:#0b0c0e"></div><div class="a" style="left:467.60px;top:395px;width:1px;height:593px;background:#12191c"></div><div class="a" style="left:489.90px;top:395px;width:1px;height:593px;background:#0b0c0e"></div><div class="a" style="left:512.20px;top:395px;width:1px;height:593px;background:#0b0c0e"></div><div class="a" style="left:534.50px;top:395px;width:1px;height:593px;background:#0b0c0e"></div><div class="a" style="left:556.80px;top:395px;width:1px;height:593px;background:#12191c"></div><div class="a" style="left:579.10px;top:395px;width:1px;height:593px;background:#0b0c0e"></div><div class="a" style="left:601.40px;top:395px;width:1px;height:593px;background:#0b0c0e"></div><div class="a" style="left:623.70px;top:395px;width:1px;height:593px;background:#0b0c0e"></div><div class="a" style="left:646.00px;top:395px;width:1px;height:593px;background:#12191c"></div><div class="a" style="left:668.30px;top:395px;width:1px;height:593px;background:#0b0c0e"></div><div class="a" style="left:690.60px;top:395px;width:1px;height:593px;background:#0b0c0e"></div><div class="a" style="left:712.90px;top:395px;width:1px;height:593px;background:#0b0c0e"></div><div class="a" style="left:735.20px;top:395px;width:1px;height:593px;background:#12191c"></div><div class="a" style="left:757.50px;top:395px;width:1px;height:593px;background:#0b0c0e"></div><div class="a" style="left:779.80px;top:395px;width:1px;height:593px;background:#0b0c0e"></div><div class="a" style="left:802.10px;top:395px;width:1px;height:593px;background:#0b0c0e"></div><div class="a" style="left:824.40px;top:395px;width:1px;height:593px;background:#12191c"></div><div class="a" style="left:846.70px;top:395px;width:1px;height:593px;background:#0b0c0e"></div><div class="a" style="left:869.00px;top:395px;width:1px;height:593px;background:#0b0c0e"></div><div class="a" style="left:891.30px;top:395px;width:1px;height:593px;background:#0b0c0e"></div><div class="a" style="left:913.60px;top:395px;width:1px;height:593px;background:#12191c"></div><div class="a" style="left:935.90px;top:395px;width:1px;height:593px;background:#0b0c0e"></div><div class="a" style="left:958.20px;top:395px;width:1px;height:593px;background:#0b0c0e"></div><div class="a" style="left:980.50px;top:395px;width:1px;height:593px;background:#0b0c0e"></div><div class="a" style="left:1002.80px;top:395px;width:1px;height:593px;background:#12191c"></div><div class="a" style="left:1025.10px;top:395px;width:1px;height:593px;background:#0b0c0e"></div><div class="a" style="left:1047.40px;top:395px;width:1px;height:593px;background:#0b0c0e"></div><div class="a" style="left:1069.70px;top:395px;width:1px;height:593px;background:#0b0c0e"></div><div class="a" style="left:1092.00px;top:395px;width:1px;height:593px;background:#12191c"></div><div class="a" style="left:1114.30px;top:395px;width:1px;height:593px;background:#0b0c0e"></div><div class="a" style="left:1136.60px;top:395px;width:1px;height:593px;background:#0b0c0e"></div><div class="a" style="left:1158.90px;top:395px;width:1px;height:593px;background:#0b0c0e"></div><div class="a" style="left:1181.20px;top:395px;width:1px;height:593px;background:#12191c"></div><div class="a" style="left:1203.50px;top:395px;width:1px;height:593px;background:#0b0c0e"></div><div class="a" style="left:1225.80px;top:395px;width:1px;height:593px;background:#0b0c0e"></div><div class="a" style="left:1248.10px;top:395px;width:1px;height:593px;background:#0b0c0e"></div><div class="a" style="left:1270.40px;top:395px;width:1px;height:593px;background:#12191c"></div><div class="a" style="left:1292.70px;top:395px;width:1px;height:593px;background:#0b0c0e"></div><div class="a" style="left:1315.00px;top:395px;width:1px;height:593px;background:#0b0c0e"></div><div class="a" style="left:1337.30px;top:395px;width:1px;height:593px;background:#0b0c0e"></div><div class="a" style="left:1359.60px;top:395px;width:1px;height:593px;background:#12191c"></div><div class="a" style="left:1381.90px;top:395px;width:1px;height:593px;background:#0b0c0e"></div><div class="a" style="left:1404.20px;top:395px;width:1px;height:593px;background:#0b0c0e"></div><div class="a" style="left:1426.50px;top:395px;width:1px;height:593px;background:#0b0c0e"></div><div class="a" style="left:1448.80px;top:395px;width:1px;height:593px;background:#12191c"></div><div class="a" style="left:1471.10px;top:395px;width:1px;height:593px;background:#0b0c0e"></div><div class="a" style="left:1493.40px;top:395px;width:1px;height:593px;background:#0b0c0e"></div><div class="a" style="left:1515.70px;top:395px;width:1px;height:593px;background:#0b0c0e"></div><div class="a" style="left:1538.00px;top:395px;width:1px;height:593px;background:#12191c"></div><div class="a" style="left:1560.30px;top:395px;width:1px;height:593px;background:#0b0c0e"></div><div class="a" style="left:1582.60px;top:395px;width:1px;height:593px;background:#0b0c0e"></div><div class="a" style="left:1604.90px;top:395px;width:1px;height:593px;background:#0b0c0e"></div><div class="a" style="left:200.00px;top:383px;width:1px;height:12px;background:#1c1d20"></div><div class="a" style="left:211.15px;top:387px;width:1px;height:8px;background:#141517"></div><div class="a" style="left:222.30px;top:387px;width:1px;height:8px;background:#141517"></div><div class="a" style="left:233.45px;top:387px;width:1px;height:8px;background:#141517"></div><div class="a" style="left:244.60px;top:383px;width:1px;height:12px;background:#1c1d20"></div><div class="a" style="left:255.75px;top:387px;width:1px;height:8px;background:#141517"></div><div class="a" style="left:266.90px;top:387px;width:1px;height:8px;background:#141517"></div><div class="a" style="left:278.05px;top:387px;width:1px;height:8px;background:#141517"></div><div class="a" style="left:289.20px;top:383px;width:1px;height:12px;background:#1c1d20"></div><div class="a" style="left:300.35px;top:387px;width:1px;height:8px;background:#141517"></div><div class="a" style="left:311.50px;top:387px;width:1px;height:8px;background:#141517"></div><div class="a" style="left:322.65px;top:387px;width:1px;height:8px;background:#141517"></div><div class="a" style="left:333.80px;top:383px;width:1px;height:12px;background:#1c1d20"></div><div class="a" style="left:344.95px;top:387px;width:1px;height:8px;background:#141517"></div><div class="a" style="left:356.10px;top:387px;width:1px;height:8px;background:#141517"></div><div class="a" style="left:367.25px;top:387px;width:1px;height:8px;background:#141517"></div><div class="a" style="left:378.40px;top:383px;width:1px;height:12px;background:#1c1d20"></div><div class="a" style="left:389.55px;top:387px;width:1px;height:8px;background:#141517"></div><div class="a" style="left:400.70px;top:387px;width:1px;height:8px;background:#141517"></div><div class="a" style="left:411.85px;top:387px;width:1px;height:8px;background:#141517"></div><div class="a" style="left:423.00px;top:383px;width:1px;height:12px;background:#1c1d20"></div><div class="a" style="left:434.15px;top:387px;width:1px;height:8px;background:#141517"></div><div class="a" style="left:445.30px;top:387px;width:1px;height:8px;background:#141517"></div><div class="a" style="left:456.45px;top:387px;width:1px;height:8px;background:#141517"></div><div class="a" style="left:467.60px;top:383px;width:1px;height:12px;background:#1c1d20"></div><div class="a" style="left:478.75px;top:387px;width:1px;height:8px;background:#141517"></div><div class="a" style="left:489.90px;top:387px;width:1px;height:8px;background:#141517"></div><div class="a" style="left:501.05px;top:387px;width:1px;height:8px;background:#141517"></div><div class="a" style="left:512.20px;top:383px;width:1px;height:12px;background:#1c1d20"></div><div class="a" style="left:523.35px;top:387px;width:1px;height:8px;background:#141517"></div><div class="a" style="left:534.50px;top:387px;width:1px;height:8px;background:#141517"></div><div class="a" style="left:545.65px;top:387px;width:1px;height:8px;background:#141517"></div><div class="a" style="left:556.80px;top:383px;width:1px;height:12px;background:#1c1d20"></div><div class="a" style="left:567.95px;top:387px;width:1px;height:8px;background:#141517"></div><div class="a" style="left:579.10px;top:387px;width:1px;height:8px;background:#141517"></div><div class="a" style="left:590.25px;top:387px;width:1px;height:8px;background:#141517"></div><div class="a" style="left:601.40px;top:383px;width:1px;height:12px;background:#1c1d20"></div><div class="a" style="left:612.55px;top:387px;width:1px;height:8px;background:#141517"></div><div class="a" style="left:623.70px;top:387px;width:1px;height:8px;background:#141517"></div><div class="a" style="left:634.85px;top:387px;width:1px;height:8px;background:#141517"></div><div class="a" style="left:646.00px;top:383px;width:1px;height:12px;background:#1c1d20"></div><div class="a" style="left:657.15px;top:387px;width:1px;height:8px;background:#141517"></div><div class="a" style="left:668.30px;top:387px;width:1px;height:8px;background:#141517"></div><div class="a" style="left:679.45px;top:387px;width:1px;height:8px;background:#141517"></div><div class="a" style="left:690.60px;top:383px;width:1px;height:12px;background:#1c1d20"></div><div class="a" style="left:701.75px;top:387px;width:1px;height:8px;background:#141517"></div><div class="a" style="left:712.90px;top:387px;width:1px;height:8px;background:#141517"></div><div class="a" style="left:724.05px;top:387px;width:1px;height:8px;background:#141517"></div><div class="a" style="left:735.20px;top:383px;width:1px;height:12px;background:#1c1d20"></div><div class="a" style="left:746.35px;top:387px;width:1px;height:8px;background:#141517"></div><div class="a" style="left:757.50px;top:387px;width:1px;height:8px;background:#141517"></div><div class="a" style="left:768.65px;top:387px;width:1px;height:8px;background:#141517"></div><div class="a" style="left:779.80px;top:383px;width:1px;height:12px;background:#1c1d20"></div><div class="a" style="left:790.95px;top:387px;width:1px;height:8px;background:#141517"></div><div class="a" style="left:802.10px;top:387px;width:1px;height:8px;background:#141517"></div><div class="a" style="left:813.25px;top:387px;width:1px;height:8px;background:#141517"></div><div class="a" style="left:824.40px;top:383px;width:1px;height:12px;background:#1c1d20"></div><div class="a" style="left:835.55px;top:387px;width:1px;height:8px;background:#141517"></div><div class="a" style="left:846.70px;top:387px;width:1px;height:8px;background:#141517"></div><div class="a" style="left:857.85px;top:387px;width:1px;height:8px;background:#141517"></div><div class="a" style="left:869.00px;top:383px;width:1px;height:12px;background:#1c1d20"></div><div class="a" style="left:880.15px;top:387px;width:1px;height:8px;background:#141517"></div><div class="a" style="left:891.30px;top:387px;width:1px;height:8px;background:#141517"></div><div class="a" style="left:902.45px;top:387px;width:1px;height:8px;background:#141517"></div><div class="a" style="left:913.60px;top:383px;width:1px;height:12px;background:#1c1d20"></div><div class="a" style="left:924.75px;top:387px;width:1px;height:8px;background:#141517"></div><div class="a" style="left:935.90px;top:387px;width:1px;height:8px;background:#141517"></div><div class="a" style="left:947.05px;top:387px;width:1px;height:8px;background:#141517"></div><div class="a" style="left:958.20px;top:383px;width:1px;height:12px;background:#1c1d20"></div><div class="a" style="left:969.35px;top:387px;width:1px;height:8px;background:#141517"></div><div class="a" style="left:980.50px;top:387px;width:1px;height:8px;background:#141517"></div><div class="a" style="left:991.65px;top:387px;width:1px;height:8px;background:#141517"></div><div class="a" style="left:1002.80px;top:383px;width:1px;height:12px;background:#1c1d20"></div><div class="a" style="left:1013.95px;top:387px;width:1px;height:8px;background:#141517"></div><div class="a" style="left:1025.10px;top:387px;width:1px;height:8px;background:#141517"></div><div class="a" style="left:1036.25px;top:387px;width:1px;height:8px;background:#141517"></div><div class="a" style="left:1047.40px;top:383px;width:1px;height:12px;background:#1c1d20"></div><div class="a" style="left:1058.55px;top:387px;width:1px;height:8px;background:#141517"></div><div class="a" style="left:1069.70px;top:387px;width:1px;height:8px;background:#141517"></div><div class="a" style="left:1080.85px;top:387px;width:1px;height:8px;background:#141517"></div><div class="a" style="left:1092.00px;top:383px;width:1px;height:12px;background:#1c1d20"></div><div class="a" style="left:1103.15px;top:387px;width:1px;height:8px;background:#141517"></div><div class="a" style="left:1114.30px;top:387px;width:1px;height:8px;background:#141517"></div><div class="a" style="left:1125.45px;top:387px;width:1px;height:8px;background:#141517"></div><div class="a" style="left:1136.60px;top:383px;width:1px;height:12px;background:#1c1d20"></div><div class="a" style="left:1147.75px;top:387px;width:1px;height:8px;background:#141517"></div><div class="a" style="left:1158.90px;top:387px;width:1px;height:8px;background:#141517"></div><div class="a" style="left:1170.05px;top:387px;width:1px;height:8px;background:#141517"></div><div class="a" style="left:1181.20px;top:383px;width:1px;height:12px;background:#1c1d20"></div><div class="a" style="left:1192.35px;top:387px;width:1px;height:8px;background:#141517"></div><div class="a" style="left:1203.50px;top:387px;width:1px;height:8px;background:#141517"></div><div class="a" style="left:1214.65px;top:387px;width:1px;height:8px;background:#141517"></div><div class="a" style="left:1225.80px;top:383px;width:1px;height:12px;background:#1c1d20"></div><div class="a" style="left:1236.95px;top:387px;width:1px;height:8px;background:#141517"></div><div class="a" style="left:1248.10px;top:387px;width:1px;height:8px;background:#141517"></div><div class="a" style="left:1259.25px;top:387px;width:1px;height:8px;background:#141517"></div><div class="a" style="left:1270.40px;top:383px;width:1px;height:12px;background:#1c1d20"></div><div class="a" style="left:1281.55px;top:387px;width:1px;height:8px;background:#141517"></div><div class="a" style="left:1292.70px;top:387px;width:1px;height:8px;background:#141517"></div><div class="a" style="left:1303.85px;top:387px;width:1px;height:8px;background:#141517"></div><div class="a" style="left:1315.00px;top:383px;width:1px;height:12px;background:#1c1d20"></div><div class="a" style="left:1326.15px;top:387px;width:1px;height:8px;background:#141517"></div><div class="a" style="left:1337.30px;top:387px;width:1px;height:8px;background:#141517"></div><div class="a" style="left:1348.45px;top:387px;width:1px;height:8px;background:#141517"></div><div class="a" style="left:1359.60px;top:383px;width:1px;height:12px;background:#1c1d20"></div><div class="a" style="left:1370.75px;top:387px;width:1px;height:8px;background:#141517"></div><div class="a" style="left:1381.90px;top:387px;width:1px;height:8px;background:#141517"></div><div class="a" style="left:1393.05px;top:387px;width:1px;height:8px;background:#141517"></div><div class="a" style="left:1404.20px;top:383px;width:1px;height:12px;background:#1c1d20"></div><div class="a" style="left:1415.35px;top:387px;width:1px;height:8px;background:#141517"></div><div class="a" style="left:1426.50px;top:387px;width:1px;height:8px;background:#141517"></div><div class="a" style="left:1437.65px;top:387px;width:1px;height:8px;background:#141517"></div><div class="a" style="left:1448.80px;top:383px;width:1px;height:12px;background:#1c1d20"></div><div class="a" style="left:1459.95px;top:387px;width:1px;height:8px;background:#141517"></div><div class="a" style="left:1471.10px;top:387px;width:1px;height:8px;background:#141517"></div><div class="a" style="left:1482.25px;top:387px;width:1px;height:8px;background:#141517"></div><div class="a" style="left:1493.40px;top:383px;width:1px;height:12px;background:#1c1d20"></div><div class="a" style="left:1504.55px;top:387px;width:1px;height:8px;background:#141517"></div><div class="a" style="left:1515.70px;top:387px;width:1px;height:8px;background:#141517"></div><div class="a" style="left:1526.85px;top:387px;width:1px;height:8px;background:#141517"></div><div class="a" style="left:1538.00px;top:383px;width:1px;height:12px;background:#1c1d20"></div><div class="a" style="left:1549.15px;top:387px;width:1px;height:8px;background:#141517"></div><div class="a" style="left:1560.30px;top:387px;width:1px;height:8px;background:#141517"></div><div class="a" style="left:1571.45px;top:387px;width:1px;height:8px;background:#141517"></div><div class="a" style="left:1582.60px;top:383px;width:1px;height:12px;background:#1c1d20"></div><div class="a" style="left:1593.75px;top:387px;width:1px;height:8px;background:#141517"></div><div class="a" style="left:1604.90px;top:387px;width:1px;height:8px;background:#141517"></div><div class="a" style="left:200px;top:367px;width:1410px;height:28px;overflow:hidden"><div class="t" style="left:calc(-200px + 192.0px);top:4px;font-size:9px;line-height:10px;color:#38383b;width:16px;text-align:center;letter-spacing:-0.3px">0:00</div><div class="t" style="left:calc(-200px + 236.6px);top:4px;font-size:9px;line-height:10px;color:#38383b;width:16px;text-align:center;letter-spacing:-0.3px">0:01</div><div class="t" style="left:calc(-200px + 281.2px);top:4px;font-size:9px;line-height:10px;color:#38383b;width:16px;text-align:center;letter-spacing:-0.3px">0:02</div><div class="t" style="left:calc(-200px + 325.8px);top:4px;font-size:9px;line-height:10px;color:#38383b;width:16px;text-align:center;letter-spacing:-0.3px">0:03</div><div class="t" style="left:calc(-200px + 370.4px);top:4px;font-size:9px;line-height:10px;color:#38383b;width:16px;text-align:center;letter-spacing:-0.3px">0:04</div><div class="t" style="left:calc(-200px + 415.0px);top:4px;font-size:9px;line-height:10px;color:#38383b;width:16px;text-align:center;letter-spacing:-0.3px">0:05</div><div class="t" style="left:calc(-200px + 459.6px);top:4px;font-size:9px;line-height:10px;color:#38383b;width:16px;text-align:center;letter-spacing:-0.3px">0:06</div><div class="t" style="left:calc(-200px + 504.2px);top:4px;font-size:9px;line-height:10px;color:#38383b;width:16px;text-align:center;letter-spacing:-0.3px">0:07</div><div class="t" style="left:calc(-200px + 548.8px);top:4px;font-size:9px;line-height:10px;color:#38383b;width:16px;text-align:center;letter-spacing:-0.3px">0:08</div><div class="t" style="left:calc(-200px + 593.4px);top:4px;font-size:9px;line-height:10px;color:#38383b;width:16px;text-align:center;letter-spacing:-0.3px">0:09</div><div class="t" style="left:calc(-200px + 638.0px);top:4px;font-size:9px;line-height:10px;color:#38383b;width:16px;text-align:center;letter-spacing:-0.3px">0:10</div><div class="t" style="left:calc(-200px + 682.6px);top:4px;font-size:9px;line-height:10px;color:#38383b;width:16px;text-align:center;letter-spacing:-0.3px">0:11</div><div class="t" style="left:calc(-200px + 727.2px);top:4px;font-size:9px;line-height:10px;color:#38383b;width:16px;text-align:center;letter-spacing:-0.3px">0:12</div><div class="t" style="left:calc(-200px + 771.8px);top:4px;font-size:9px;line-height:10px;color:#38383b;width:16px;text-align:center;letter-spacing:-0.3px">0:13</div><div class="t" style="left:calc(-200px + 816.4px);top:4px;font-size:9px;line-height:10px;color:#38383b;width:16px;text-align:center;letter-spacing:-0.3px">0:14</div><div class="t" style="left:calc(-200px + 861.0px);top:4px;font-size:9px;line-height:10px;color:#38383b;width:16px;text-align:center;letter-spacing:-0.3px">0:15</div><div class="t" style="left:calc(-200px + 905.6px);top:4px;font-size:9px;line-height:10px;color:#38383b;width:16px;text-align:center;letter-spacing:-0.3px">0:16</div><div class="t" style="left:calc(-200px + 950.2px);top:4px;font-size:9px;line-height:10px;color:#38383b;width:16px;text-align:center;letter-spacing:-0.3px">0:17</div><div class="t" style="left:calc(-200px + 994.8px);top:4px;font-size:9px;line-height:10px;color:#38383b;width:16px;text-align:center;letter-spacing:-0.3px">0:18</div><div class="t" style="left:calc(-200px + 1039.4px);top:4px;font-size:9px;line-height:10px;color:#38383b;width:16px;text-align:center;letter-spacing:-0.3px">0:19</div><div class="t" style="left:calc(-200px + 1084.0px);top:4px;font-size:9px;line-height:10px;color:#38383b;width:16px;text-align:center;letter-spacing:-0.3px">0:20</div><div class="t" style="left:calc(-200px + 1128.6px);top:4px;font-size:9px;line-height:10px;color:#38383b;width:16px;text-align:center;letter-spacing:-0.3px">0:21</div><div class="t" style="left:calc(-200px + 1173.2px);top:4px;font-size:9px;line-height:10px;color:#38383b;width:16px;text-align:center;letter-spacing:-0.3px">0:22</div><div class="t" style="left:calc(-200px + 1217.8px);top:4px;font-size:9px;line-height:10px;color:#38383b;width:16px;text-align:center;letter-spacing:-0.3px">0:23</div><div class="t" style="left:calc(-200px + 1262.4px);top:4px;font-size:9px;line-height:10px;color:#38383b;width:16px;text-align:center;letter-spacing:-0.3px">0:24</div><div class="t" style="left:calc(-200px + 1307.0px);top:4px;font-size:9px;line-height:10px;color:#38383b;width:16px;text-align:center;letter-spacing:-0.3px">0:25</div><div class="t" style="left:calc(-200px + 1351.6px);top:4px;font-size:9px;line-height:10px;color:#38383b;width:16px;text-align:center;letter-spacing:-0.3px">0:26</div><div class="t" style="left:calc(-200px + 1396.2px);top:4px;font-size:9px;line-height:10px;color:#38383b;width:16px;text-align:center;letter-spacing:-0.3px">0:27</div><div class="t" style="left:calc(-200px + 1440.8px);top:4px;font-size:9px;line-height:10px;color:#38383b;width:16px;text-align:center;letter-spacing:-0.3px">0:28</div><div class="t" style="left:calc(-200px + 1485.4px);top:4px;font-size:9px;line-height:10px;color:#38383b;width:16px;text-align:center;letter-spacing:-0.3px">0:29</div><div class="t" style="left:calc(-200px + 1530.0px);top:4px;font-size:9px;line-height:10px;color:#38383b;width:16px;text-align:center;letter-spacing:-0.3px">0:30</div><div class="t" style="left:calc(-200px + 1574.6px);top:4px;font-size:9px;line-height:10px;color:#38383b;width:16px;text-align:center;letter-spacing:-0.3px">0:31</div><div class="t" style="left:calc(-200px + 1619.2px);top:4px;font-size:9px;line-height:10px;color:#38383b;width:16px;text-align:center;letter-spacing:-0.3px">0:32</div></div><div class="a" style="left:0px;top:395px;width:200px;height:64px;background:#0c0c0e;border-bottom:1px solid #18181b"></div><div class="a" style="left:0px;top:395px;width:2px;height:63px;background:#8a1c3c"></div><div class="a" style="left:7.5px;top:400px;width:122px;height:17px;background:#09090b;border:1px solid #1a1a1d;border-radius:2px"></div><div class="t " style="left:8.5px;top:404.6px;font-size:11.5px;line-height:11.5px;color:#a3a3a3;font-weight:bold;font-family:'Liberation Sans',sans-serif;">Audio Track</div><svg style="left:138.5px;top:405px" width="9" height="9" viewBox="0 0 9 9"><path d="M1 8L6 3M5 1.5l.6 1M7.5 2.5l-1 .6M2.2 6l1 1" stroke="#38383b" stroke-width="1.4"/></svg><div class="a" style="left:155px;top:400px;width:17.5px;height:15.5px;background:#140d20;border-radius:3px"></div><svg style="left:158.5px;top:402.5px" width="10" height="10" viewBox="0 0 10 10"><path d="M2 1.5L8 8.5M8 1.5L2 8.5M3 5h4" stroke="#3f1f75" stroke-width="1.2"/></svg><div class="a" style="left:184.5px;top:406px;width:1px;height:8px;background:#2a2a2c"></div><div class="a" style="left:7.699999999999999px;top:419px;width:20px;height:20px;background:#121214;border-radius:50%"></div><div class="t " style="left:14.2px;top:425.0px;font-size:8px;line-height:8px;color:#444;font-weight:bold;font-family:'Liberation Sans',sans-serif;">M</div><div class="a" style="left:32.9px;top:419px;width:20px;height:20px;background:#121214;border-radius:50%"></div><div class="t " style="left:39.4px;top:425.0px;font-size:8px;line-height:8px;color:#444;font-weight:bold;font-family:'Liberation Sans',sans-serif;">S</div><div class="a" style="left:55.599999999999994px;top:419px;width:20px;height:20px;background:#121214;border-radius:50%"></div><div class="a" style="left:61.599999999999994px;top:425px;width:8px;height:8px;border:1px solid #2a2a2d;border-radius:50%"></div><div class="a" style="left:91px;top:426.5px;width:70px;height:5px;background:#131315;border-radius:3px"></div><div class="a" style="left:91px;top:426.5px;width:52px;height:5px;background:#7a5f19;border-radius:3px"></div><div class="a" style="left:137.5px;top:423px;width:11px;height:11px;background:#9a9a9a;border-radius:50%"></div><div class="t " style="left:179.0px;top:425.6px;font-size:7.5px;line-height:7.5px;color:#8f8f8f;font-weight:bold;font-family:'Liberation Mono',monospace;letter-spacing:-0.4px">-2dB</div><div class="t " style="left:8.0px;top:442.0px;font-size:8px;line-height:8px;color:#777;font-weight:bold;font-family:'Liberation Sans',sans-serif;">T</div><div class="a" style="left:25px;top:443.5px;width:133px;height:5px;background:#131315;border-radius:3px"></div><div class="a" style="left:25px;top:443.5px;width:66px;height:5px;background:#7a5f19;border-radius:3px"></div><div class="a" style="left:86px;top:440.5px;width:12px;height:12px;background:#9a9a9a;border-radius:50%"></div><div class="t " style="left:178.5px;top:443.4px;font-size:7.5px;line-height:7.5px;color:#8f8f8f;font-weight:bold;font-family:'Liberation Mono',monospace;letter-spacing:-0.3px">0st</div><div class="a" style="left:0px;top:459.5px;width:200px;height:24px;background:#0c0c0e;border-bottom:1px solid #151517"></div><div class="a" style="left:9px;top:467.5px;width:5px;height:8px;border:1px solid #2a2a2c;border-radius:1px"></div><div class="t " style="left:19.5px;top:468.0px;font-size:7px;line-height:7px;color:#505050;font-weight:bold;font-family:'Liberation Sans',sans-serif;font-style:italic">No FX</div><div class="a" style="left:200px;top:483px;width:1410px;height:1px;background:#131518"></div><div class="a" style="left:200px;top:395px;width:1px;height:591px;background:#742432"></div><div class="t sb" style="left:14.5px;top:963.7px;font-size:10.6px;line-height:10.6px;color:#8c8c8c;font-weight:normal;font-family:'Liberation Sans',sans-serif;">© 2026 Shimuv. All rights reserved.</div><svg style="left:196.5px;top:964.5px" width="9" height="9" viewBox="0 0 24 24" fill="none" stroke="#6a6a6a" stroke-width="1.6" stroke-linecap="round" stroke-linejoin="round" ><path d="m18 15-6-6-6 6"/></svg><div class="a" style="left:202px;top:987.5px;width:217px;height:5px;background:#6e5614;border-radius:3px"></div><div class="a" style="left:0px;top:992px;width:1610px;height:1px;background:#000"></div><div class="a" style="left:733px;top:274px;width:455.5px;height:510px;background:#07080b;border:1px solid #222327;border-radius:10px"></div><div class="t " style="left:755.0px;top:297.5px;font-size:16px;line-height:16px;color:#f4f4f5;font-weight:bold;font-family:'Liberation Sans',sans-serif;">Import Audio</div><div class="t " style="left:755.0px;top:322.9px;font-size:12.7px;line-height:12.7px;color:#a1a1aa;font-weight:normal;font-family:'Liberation Sans',sans-serif;">Add audio from your library or upload a file</div><svg style="left:1160.0px;top:289.5px" width="13" height="13" viewBox="0 0 24 24" fill="none" stroke="#c9c9cc" stroke-width="2" stroke-linecap="round" stroke-linejoin="round" ><path d="M18 6 6 18"/><path d="m6 6 12 12"/></svg><div class="a" style="left:755px;top:366px;width:411px;height:32px;background:#1b1b1f;border-radius:10px"></div><div class="a" style="left:759px;top:369px;width:78px;height:25px;background:#0f0f12;border-radius:8px"></div><div class="t" style="left:759px;top:374.5px;width:78px;text-align:center;font-size:12px;line-height:14px;color:#d4d4d8;font-weight:bold">AI Tracks</div><div class="a" style="left:840px;top:369px;width:78px;height:25px;background:#0f0f12;border-radius:8px"></div><div class="t" style="left:840px;top:374.5px;width:78px;text-align:center;font-size:12px;line-height:14px;color:#d4d4d8;font-weight:bold">Recordings</div><div class="a" style="left:923px;top:369px;width:73px;height:25px;background:#0f0f12;border-radius:8px"></div><div class="t" style="left:923px;top:374.5px;width:73px;text-align:center;font-size:12px;line-height:14px;color:#d4d4d8;font-weight:bold">Stems</div><div class="a" style="left:1002px;top:369px;width:80px;height:25px;background:#0f0f12;border-radius:8px"></div><div class="t" style="left:1002px;top:374.5px;width:80px;text-align:center;font-size:12px;line-height:14px;color:#d4d4d8;font-weight:bold">Instrumentals</div><div class="a" style="left:1084px;top:369px;width:78px;height:25px;background:#0f0f12;border-radius:8px"></div><div class="t" style="left:1084px;top:374.5px;width:78px;text-align:center;font-size:12px;line-height:14px;color:#d4d4d8;font-weight:bold">Upload File</div><div class="a" style="left:755px;top:419.5px;width:411.5px;height:329px;background:#111114;border:1px solid #1f1f23;border-radius:10px"></div><div class="a" style="left:770px;top:435px;width:36px;height:35px;background:linear-gradient(135deg,#2f7ff3,#13acf0);border-radius:4px"></div><svg style="left:779.0px;top:443.5px" width="18" height="18" viewBox="0 0 24 24" fill="none" stroke="#ffffff" stroke-width="2" stroke-linecap="round" stroke-linejoin="round" ><path d="M9 18V5l12-2v13"/><circle cx="6" cy="18" r="3"/><circle cx="18" cy="16" r="3"/></svg><div class="t " style="left:816.0px;top:439.0px;font-size:12px;line-height:12px;color:#e4e4e7;font-weight:bold;font-family:'Liberation Sans',sans-serif;">lets go and show me (Cover 2)</div><div class="t " style="left:816.0px;top:455.8px;font-size:10.5px;line-height:10.5px;color:#c4c4c8;font-weight:normal;font-family:'Liberation Sans',sans-serif;">Stem Separated</div><svg style="left:1132.5px;top:445.5px" width="13" height="13" viewBox="0 0 24 24" fill="none" stroke="#6b6b70" stroke-width="2" stroke-linecap="round" stroke-linejoin="round" ><path d="M3 6h18"/><path d="M19 6v14c0 1-1 2-2 2H7c-1 0-2-1-2-2V6"/><path d="M8 6V4c0-1 1-2 2-2h4c1 0 2 1 2 2v2"/><line x1="10" x2="10" y1="11" y2="17"/><line x1="14" x2="14" y1="11" y2="17"/></svg><div class="a" style="left:770px;top:481px;width:381px;height:36px;background:#0a93bd;border-radius:10px"></div><div class="a" style="left:894px;top:490.5px;width:17.5px;height:16.5px;background:#fff;border:1px solid #333;border-radius:4px"></div><svg style="left:922.5px;top:492.0px" width="14" height="14" viewBox="0 0 24 24" fill="none" stroke="#e6f6fb" stroke-width="2.2" stroke-linecap="round" stroke-linejoin="round" ><path d="M5 12h14"/><path d="M12 5v14"/></svg><div class="t " style="left:948.0px;top:493.1px;font-size:11.7px;line-height:11.7px;color:#e6f6fb;font-weight:bold;font-family:'Liberation Sans',sans-serif;">Add All Stems</div><div class="a" style="left:770px;top:527.5px;width:381px;height:46px;background:#1b1b1f;border-radius:10px"></div><div class="a" style="left:781px;top:540.0px;width:21px;height:21.5px;background:#9b1cf2;border-radius:3px"></div><div class="t " style="left:809.0px;top:544.5px;font-size:12px;line-height:12px;color:#e4e4e7;font-weight:bold;font-family:'Liberation Sans',sans-serif;">Vocals</div><div class="a" style="left:1083px;top:538px;width:58px;height:25px;background:#9b1cf2;border-radius:4px"></div><svg style="left:1093.0px;top:543.5px" width="14" height="14" viewBox="0 0 24 24" fill="none" stroke="#fff" stroke-width="2" stroke-linecap="round" stroke-linejoin="round" ><path d="M5 12h14"/><path d="M12 5v14"/></svg><div class="t " style="left:1110.0px;top:545.2px;font-size:10.5px;line-height:10.5px;color:#fff;font-weight:bold;font-family:'Liberation Sans',sans-serif;">Add</div><div class="a" style="left:782.9px;top:546.9px;width:7.2px;height:7.2px;background:#fff;transform:rotate(45deg)"></div><div class="a" style="left:792.9px;top:546.9px;width:7.2px;height:7.2px;background:#fff;transform:rotate(45deg)"></div><div class="a" style="left:770px;top:581px;width:381px;height:46px;background:#1b1b1f;border-radius:10px"></div><div class="a" style="left:781px;top:593.5px;width:21px;height:21.5px;background:#e00b1a;border-radius:3px"></div><div class="t " style="left:809.0px;top:598.0px;font-size:12px;line-height:12px;color:#e4e4e7;font-weight:bold;font-family:'Liberation Sans',sans-serif;">Drums</div><div class="a" style="left:1083px;top:591px;width:58px;height:25px;background:#e00b1a;border-radius:4px"></div><svg style="left:1093.0px;top:596.5px" width="14" height="14" viewBox="0 0 24 24" fill="none" stroke="#fff" stroke-width="2" stroke-linecap="round" stroke-linejoin="round" ><path d="M5 12h14"/><path d="M12 5v14"/></svg><div class="t " style="left:1110.0px;top:598.2px;font-size:10.5px;line-height:10.5px;color:#fff;font-weight:bold;font-family:'Liberation Sans',sans-serif;">Add</div><div class="a" style="left:788px;top:600px;width:7px;height:9px;background:#f3d6dc;border-radius:45%"></div><svg style="left:785px;top:597px" width="13" height="6" viewBox="0 0 13 6"><path d="M1 1l3 3M12 1L9 4" stroke="#f3d6dc" stroke-width="1"/></svg><div class="a" style="left:770px;top:634.5px;width:381px;height:46px;background:#1b1b1f;border-radius:10px"></div><div class="a" style="left:781px;top:647.0px;width:21px;height:21.5px;background:#f05a0a;border-radius:3px"></div><div class="t " style="left:809.0px;top:651.5px;font-size:12px;line-height:12px;color:#e4e4e7;font-weight:bold;font-family:'Liberation Sans',sans-serif;">Bass</div><div class="a" style="left:1083px;top:644.5px;width:58px;height:25px;background:#f05a0a;border-radius:4px"></div><svg style="left:1093.0px;top:650.0px" width="14" height="14" viewBox="0 0 24 24" fill="none" stroke="#fff" stroke-width="2" stroke-linecap="round" stroke-linejoin="round" ><path d="M5 12h14"/><path d="M12 5v14"/></svg><div class="t " style="left:1110.0px;top:651.8px;font-size:10.5px;line-height:10.5px;color:#fff;font-weight:bold;font-family:'Liberation Sans',sans-serif;">Add</div><svg style="left:785px;top:649.5px" width="14" height="14" viewBox="0 0 14 14"><path d="M7.5 6.5L11.5 2.5" stroke="#b0306a" stroke-width="1.3"/><ellipse cx="5.5" cy="9" rx="2.8" ry="2.2" transform="rotate(-45 5.5 9)" fill="#f0c8e8"/></svg><div class="a" style="left:770px;top:688px;width:381px;height:46px;background:#1b1b1f;border-radius:10px"></div><div class="a" style="left:781px;top:700.5px;width:21px;height:21.5px;background:#e8800f;border-radius:3px"></div><div class="t " style="left:809.0px;top:705.0px;font-size:12px;line-height:12px;color:#e4e4e7;font-weight:bold;font-family:'Liberation Sans',sans-serif;">Guitar</div><div class="a" style="left:1083px;top:698px;width:58px;height:25px;background:#e8800f;border-radius:4px"></div><svg style="left:1093.0px;top:703.5px" width="14" height="14" viewBox="0 0 24 24" fill="none" stroke="#fff" stroke-width="2" stroke-linecap="round" stroke-linejoin="round" ><path d="M5 12h14"/><path d="M12 5v14"/></svg><div class="t " style="left:1110.0px;top:705.2px;font-size:10.5px;line-height:10.5px;color:#fff;font-weight:bold;font-family:'Liberation Sans',sans-serif;">Add</div><svg style="left:785px;top:703px" width="14" height="14" viewBox="0 0 14 14"><path d="M7.5 6.5L11.5 2.5" stroke="#b0306a" stroke-width="1.3"/><ellipse cx="5.5" cy="9" rx="2.8" ry="2.2" transform="rotate(-45 5.5 9)" fill="#f0c8e8"/></svg><div class="a" style="left:671px;top:137px;width:125px;height:46px;border:5px solid #ea1d25"></div><div class="a" style="left:1444px;top:160px;width:88px;height:71px;border:5px solid #ea1d25"></div><div class="a" style="left:918px;top:351.5px;width:82px;height:69px;border:5px solid #ea1d25"></div><div class="a" style="left:292px;top:381px;width:358px;height:254px;border:5px solid #ea1d25;border-bottom-width:6px"></div><div class="t " style="left:351.0px;top:408.6px;font-size:12.5px;line-height:12.5px;color:#c8222a;font-weight:bold;font-family:'Liberation Sans',sans-serif;">1) If you separated stems within the library,</div><div class="t " style="left:351.0px;top:426.8px;font-size:12.5px;line-height:12.5px;color:#c8222a;font-weight:bold;font-family:'Liberation Sans',sans-serif;">you will find the separated stems in your</div><div class="t " style="left:351.0px;top:444.9px;font-size:12.5px;line-height:12.5px;color:#c8222a;font-weight:bold;font-family:'Liberation Sans',sans-serif;">Import Audio Folder under "stems."</div><div class="t " style="left:350.3px;top:498.1px;font-size:12.5px;line-height:12.5px;color:#c8222a;font-weight:bold;font-family:'Liberation Sans',sans-serif;">2)If you need to separate stems of your</div><div class="t " style="left:350.3px;top:516.1px;font-size:12.5px;line-height:12.5px;color:#c8222a;font-weight:bold;font-family:'Liberation Sans',sans-serif;">recording, select stems in the right hand</div><div class="t " style="left:350.3px;top:534.1px;font-size:12.5px;line-height:12.5px;color:#c8222a;font-weight:bold;font-family:'Liberation Sans',sans-serif;">corner. Next, scroll to the bottom stem section</div><div class="t " style="left:350.3px;top:552.1px;font-size:12.5px;line-height:12.5px;color:#c8222a;font-weight:bold;font-family:'Liberation Sans',sans-serif;">and select the recording of the stems that</div><div class="t " style="left:350.3px;top:570.1px;font-size:12.5px;line-height:12.5px;color:#c8222a;font-weight:bold;font-family:'Liberation Sans',sans-serif;">should be separated.</div><div class="a" style="left:0px;top:993px;width:1610px;height:20px;background:linear-gradient(90deg,#dfe6ee,#dfe7f0)"></div><div class="a" style="left:22px;top:1003px;width:22px;height:22px;background:#f0b429;border-radius:50%"></div><div class="a" style="left:33px;top:997px;width:18px;height:18px;background:#d1271e;border-radius:50%"></div><div class="t " style="left:38.5px;top:1001.5px;font-size:11px;line-height:11px;color:#fff;font-weight:normal;font-family:'Liberation Sans',sans-serif;">1</div><div class="t " style="left:56.5px;top:1004.0px;font-size:12px;line-height:12px;color:#222;font-weight:normal;font-family:'Liberation Sans',sans-serif;">81°F</div><div class="a" style="left:434px;top:1007.5px;width:12px;height:12px;background:#1e8fe6"></div><div class="a" style="left:447px;top:1007.5px;width:12px;height:12px;background:#1e8fe6"></div><div class="a" style="left:477px;top:1003px;width:239px;height:30px;background:#f3f5f8;border-radius:15px;border:1px solid #cfd6de"></div><div class="a" style="left:675px;top:1006px;width:30px;height:14px;background:radial-gradient(circle at 60% 60%,#c9c7e6,#eef0f6);border-radius:50%"></div><div class="a" style="left:695px;top:1007px;width:16px;height:16px;background:#5ea61e;border-radius:50%"></div><div class="a" style="left:739px;top:1006px;width:20px;height:10px;background:#f8f6f2;border-radius:2px"></div><div class="a" style="left:783.5px;top:1008px;width:21.5px;height:21.5px;background:#2f6f55;border-radius:50%;border:1.5px solid #e8f0f0"></div><div class="a" style="left:831px;top:1005.5px;width:24px;height:24px;background:#1aa6c8;border-radius:50%;"></div><div class="a" style="left:879px;top:1006px;width:26px;height:10px;background:#f2c14a;border-radius:2px"></div><div class="a" style="left:927px;top:1008px;width:25px;height:10px;background:#2a6db5;border-radius:2px"></div><div class="a" style="left:933px;top:1005.5px;width:13px;height:4px;border:2px solid #2a6db5;border-bottom:none;border-radius:2px 2px 0 0"></div><div class="a" style="left:976px;top:1006px;width:26px;height:10px;background:#3f9b3a"></div><div class="a" style="left:981px;top:1010px;width:4px;height:4px;background:#111"></div><div class="a" style="left:993px;top:1010px;width:4px;height:4px;background:#111"></div><div class="a" style="left:1025px;top:1005.5px;width:25px;height:25px;background:#5b5fe0;border-radius:50%;"></div><div class="a" style="left:1074px;top:1005.5px;width:23px;height:23px;background:#1d2733;border-radius:50%;"></div><div class="a" style="left:1125px;top:1008px;width:19px;height:10px;background:#f7f7f7;border-radius:3px 3px 0 0"></div><div class="a" style="left:1171px;top:1007px;width:18px;height:10px;background:#f0f0f0;border-top:2px solid #e04040"></div><div class="a" style="left:1219px;top:1008px;width:20px;height:10px;background:#23913b"></div><div class="a" style="left:1232.5px;top:999px;width:18.0px;height:18.0px;background:#1c73d9;border-radius:50%;"></div><div class="t " style="left:1238.0px;top:1002.0px;font-size:11px;line-height:11px;color:#fff;font-weight:normal;font-family:'Liberation Sans',sans-serif;">5</div><div class="a" style="left:1267.5px;top:1006px;width:26.5px;height:10px;background:#121212"></div><div class="a" style="left:1318px;top:1008px;width:23px;height:23px;background:#27b04c;border-radius:50%;"></div><div class="a" style="left:1365px;top:1006px;width:22px;height:22px;background:#e03a3a;border-radius:50%;"></div><div class="a" style="left:1379px;top:998.5px;width:18px;height:18px;background:#6a63c9;border-radius:50%;"></div><div class="t " style="left:1384.5px;top:1002.0px;font-size:10px;line-height:10px;color:#e6e4f7;font-weight:normal;font-family:'Liberation Sans',sans-serif;">T</div><div class="a" style="left:1415px;top:1007px;width:20px;height:20px;background:#e03a3a;border-radius:50%;"></div><div class="a" style="left:1427px;top:998.5px;width:18px;height:18px;background:#2e7a2e;border-radius:50%;"></div><div class="t " style="left:1432.5px;top:1002.5px;font-size:10px;line-height:10px;color:#e6f1e6;font-weight:normal;font-family:'Liberation Sans',sans-serif;">S</div><div class="a" style="left:1464.5px;top:1006px;width:23.5px;height:23.5px;background:#7cc7ee;border-radius:50%;"></div></body></html>
